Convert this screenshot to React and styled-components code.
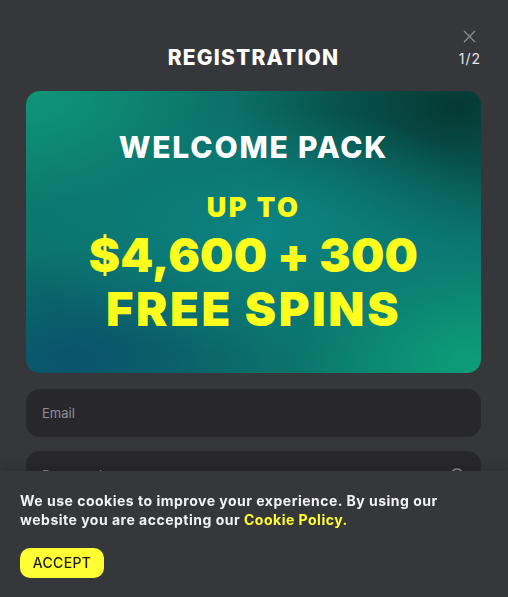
import styled, { createGlobalStyle } from 'styled-components';

const GlobalStyle = createGlobalStyle`
  html, body {
    margin: 0;
    padding: 0;
    background: #36373b;
    overflow: hidden;
  }
  * {
    box-sizing: border-box;
  }
`;

const FONT = `'Inter', 'Liberation Sans', sans-serif`;

const Modal = styled.div`
  width: 508px;
  height: 597px;
  padding: 0 27px 0 26px;
  background: #36373b;
  font-family: ${FONT};
  overflow: hidden;
`;

/* 상단 타이틀 */
const Header = styled.div`
  position: relative;
  display: flex;
  justify-content: center;
  align-items: center;
  height: 91px;
  padding-top: 24px;
`;

const Title = styled.h1`
  margin: 0;
  font: 800 21px/1 ${FONT};
  color: #ffffff;
  letter-spacing: 1.2px;
`;

const Side = styled.div`
  position: absolute;
  right: 0;
  top: 30px;
  display: flex;
  flex-direction: column;
  align-items: center;
  gap: 9px;
`;

const Close = styled.button`
  display: flex;
  padding: 0;
  border: 0;
  background: none;
  color: #8b8c90;
  cursor: pointer;
`;

const Step = styled.span`
  font: 400 14px/1 ${FONT};
  color: #e6e6e8;
  letter-spacing: 1px;
`;

/* 배너 */
const Banner = styled.div`
  display: flex;
  flex-direction: column;
  align-items: center;
  height: 282px;
  padding-top: 41px;
  border-radius: 14px;
  background:
    radial-gradient(ellipse 55% 45% at 52% 50%, rgba(12, 134, 132, 0.95), rgba(12, 134, 132, 0) 100%),
    radial-gradient(ellipse 45% 40% at 10% 95%, rgba(10, 80, 110, 0.9), rgba(10, 80, 110, 0) 100%),
    radial-gradient(ellipse 40% 40% at 98% 96%, rgba(12, 160, 120, 0.95), rgba(12, 160, 120, 0) 100%),
    radial-gradient(ellipse 50% 50% at 95% 5%, rgba(5, 55, 50, 0.98), rgba(5, 55, 50, 0) 100%),
    radial-gradient(ellipse 40% 40% at 2% 2%, rgba(14, 150, 120, 0.9), rgba(14, 150, 120, 0) 100%),
    linear-gradient(135deg, #0d7e72 0%, #0b6a64 45%, #0c7a72 100%);
  text-align: center;
`;

const Welcome = styled.div`
  font: 800 30px/1 ${FONT};
  color: #ffffff;
  letter-spacing: 1.8px;
`;

const Yellow = styled.div`
  font: 900 ${(p) => p.size}px/1 ${FONT};
  color: #ffff1e;
  margin-top: ${(p) => p.top}px;
  letter-spacing: ${(p) => p.spacing}px;
`;

/* 입력창 */
const Form = styled.div`
  display: flex;
  flex-direction: column;
  gap: 14px;
  margin-top: 16px;
`;

const Field = styled.div`
  display: flex;
  align-items: center;
  justify-content: space-between;
  height: 48px;
  padding: 0 16px;
  border-radius: 14px;
  background: #28282b;
  font: 400 13px/1 ${FONT};
  color: #8f8f94;
`;

/* 쿠키 배너 */
const CookieBar = styled.div`
  position: fixed;
  left: 0;
  right: 0;
  bottom: 0;
  height: 126px;
  padding: 20px 20px 0;
  background: #36373b;
  box-shadow: 0 -4px 10px rgba(0, 0, 0, 0.12);
  font-family: ${FONT};
`;

const CookieText = styled.p`
  margin: 0;
  font: 700 14px/19px ${FONT};
  color: #f2f2f2;
  letter-spacing: 0.5px;
`;

const PolicyLink = styled.a`
  color: #ffff33;
  text-decoration: none;
`;

const AcceptBtn = styled.button`
  display: flex;
  align-items: center;
  justify-content: center;
  width: 84px;
  height: 30px;
  margin-top: 19px;
  border: 0;
  border-radius: 10px;
  background: #ffff33;
  font: 500 14px/1 ${FONT};
  color: #1d1d1f;
  letter-spacing: 0.3px;
  cursor: pointer;
`;

const App = () => {
  return (
    <>
      <GlobalStyle />
      <Modal>
        <Header>
          <Title>REGISTRATION</Title>
          <Side>
            <Close aria-label='close'>
              <svg width='13' height='13' viewBox='0 0 13 13'>
                <path d='M1 1L12 12M12 1L1 12' stroke='currentColor' strokeWidth='1.3' />
              </svg>
            </Close>
            <Step>1/2</Step>
          </Side>
        </Header>

        <Banner>
          <Welcome>WELCOME PACK</Welcome>
          <Yellow size={27} top={32} spacing={2.5}>UP TO</Yellow>
          <Yellow size={47} top={10} spacing={0.2}>$4,600 + 300</Yellow>
          <Yellow size={47} top={7} spacing={2.6}>FREE SPINS</Yellow>
        </Banner>

        <Form>
          <Field>Email</Field>
          <Field>
            Password
            <svg width='16' height='16' viewBox='0 0 16 16'>
              <circle cx='8' cy='8' r='6' fill='none' stroke='#8f8f94' strokeWidth='1.3' />
            </svg>
          </Field>
        </Form>
      </Modal>

      <CookieBar>
        <CookieText>
          We use cookies to improve your experience. By using our
          <br />
          website you are accepting our <PolicyLink href='#'>Cookie Policy.</PolicyLink>
        </CookieText>
        <AcceptBtn>ACCEPT</AcceptBtn>
      </CookieBar>
    </>
  );
};

export default App;
